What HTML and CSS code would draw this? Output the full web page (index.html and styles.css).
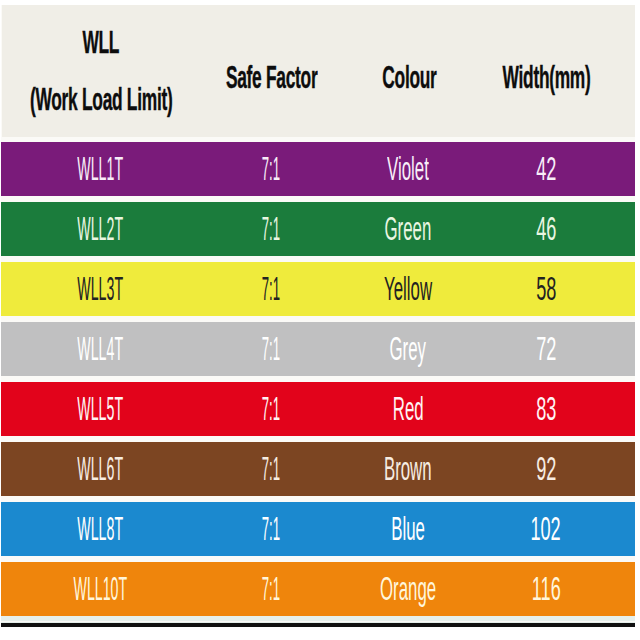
FILE: index.html
```html
<!DOCTYPE html>
<html>
<head>
<meta charset="utf-8">
<link rel="stylesheet" href="styles.css">
</head>
<body>
<div class="table">
  <div class="head">
    <div class="cell c1"><span class="h">WLL</span><span class="h">(Work Load Limit)</span></div>
    <div class="cell c2"><span class="h">Safe Factor</span></div>
    <div class="cell c3"><span class="h">Colour</span></div>
    <div class="cell c4"><span class="h">Width(mm)</span></div>
  </div>
  <div class="row violet"><div class="cell c1"><span class="t t1">WLL1T</span></div><div class="cell c2"><span class="t t2">7:1</span></div><div class="cell c3"><span class="t t3">Violet</span></div><div class="cell c4"><span class="t t4">42</span></div></div>
  <div class="row green"><div class="cell c1"><span class="t t1">WLL2T</span></div><div class="cell c2"><span class="t t2">7:1</span></div><div class="cell c3"><span class="t t3">Green</span></div><div class="cell c4"><span class="t t4">46</span></div></div>
  <div class="row yellow"><div class="cell c1"><span class="t t1">WLL3T</span></div><div class="cell c2"><span class="t t2">7:1</span></div><div class="cell c3"><span class="t t3">Yellow</span></div><div class="cell c4"><span class="t t4">58</span></div></div>
  <div class="row grey"><div class="cell c1"><span class="t t1">WLL4T</span></div><div class="cell c2"><span class="t t2">7:1</span></div><div class="cell c3"><span class="t t3">Grey</span></div><div class="cell c4"><span class="t t4">72</span></div></div>
  <div class="row red"><div class="cell c1"><span class="t t1">WLL5T</span></div><div class="cell c2"><span class="t t2">7:1</span></div><div class="cell c3"><span class="t t3">Red</span></div><div class="cell c4"><span class="t t4">83</span></div></div>
  <div class="row brown"><div class="cell c1"><span class="t t1">WLL6T</span></div><div class="cell c2"><span class="t t2">7:1</span></div><div class="cell c3"><span class="t t3">Brown</span></div><div class="cell c4"><span class="t t4">92</span></div></div>
  <div class="row blue"><div class="cell c1"><span class="t t1">WLL8T</span></div><div class="cell c2"><span class="t t2">7:1</span></div><div class="cell c3"><span class="t t3">Blue</span></div><div class="cell c4"><span class="t t4">102</span></div></div>
  <div class="row orange"><div class="cell c1"><span class="t t1">WLL10T</span></div><div class="cell c2"><span class="t t2">7:1</span></div><div class="cell c3"><span class="t t3">Orange</span></div><div class="cell c4"><span class="t t4">116</span></div></div>
  <div class="foot"></div>
</div>
</body>
</html>
```
FILE: styles.css
```css
html, body {
  margin: 0;
  padding: 0;
  background: #ffffff;
}
body {
  width: 640px;
  height: 640px;
  overflow: hidden;
  font-family: "Liberation Sans", Arial, sans-serif;
}
.table {
  margin: 5px 0 0 1px;
  width: 634px;
  display: flex;
  flex-direction: column;
  gap: 6px;
  background: #fbfaf7;
}
.head, .row {
  display: grid;
  grid-template-columns: 198px 144px 130px 146px 16px;
}
.head {
  height: 132px;
  background: #f0eee7;
  margin-left: 1px;
  margin-bottom: -1px;
}
.row {
  height: 54px;
}
.cell {
  display: flex;
  flex-direction: column;
  align-items: center;
  justify-content: center;
  overflow: visible;
  white-space: nowrap;
}
.h {
  display: inline-block;
  font-weight: bold;
  font-size: 31px;
  line-height: 50px;
  color: #0d0d0d;
  transform: scaleX(0.56);
  letter-spacing: -0.5px;
  -webkit-text-stroke: 0.4px #0d0d0d;
}
.head .c1 .h { line-height: 57px; }
.head .c1 { padding-top: 0; }
.head .c2, .head .c3, .head .c4 { padding-top: 14px; }
.t {
  display: inline-block;
  font-size: 33px;
  line-height: 54px;
  padding-bottom: 7px;
  font-weight: normal;
}
.t1 { transform: scaleX(0.43); }
.t2 { transform: scaleX(0.40); }
.t3 { transform: scaleX(0.51); }
.t4 { transform: scaleX(0.55); }

.violet { background: #7a1b7a; color: #f8eef8; }
.green { background: #1b7c3c; color: #eaf6e2; }
.yellow { background: #efeb3c; color: #222222; }
.grey { background: #c0c0c1; color: #ffffff; }
.red { background: #e2031b; color: #fff4f4; }
.brown { background: #7c4522; color: #f7ede2; }
.blue { background: #1b89cf; color: #ffffff; }
.orange { background: #ef850c; color: #fff6dc; }

.foot {
  height: 4px;
  margin-top: 0;
  background: #111111;
  border-top: 1px solid #e4efea;
  box-shadow: 0 -6px 0 #e6f0ec;
}
```
